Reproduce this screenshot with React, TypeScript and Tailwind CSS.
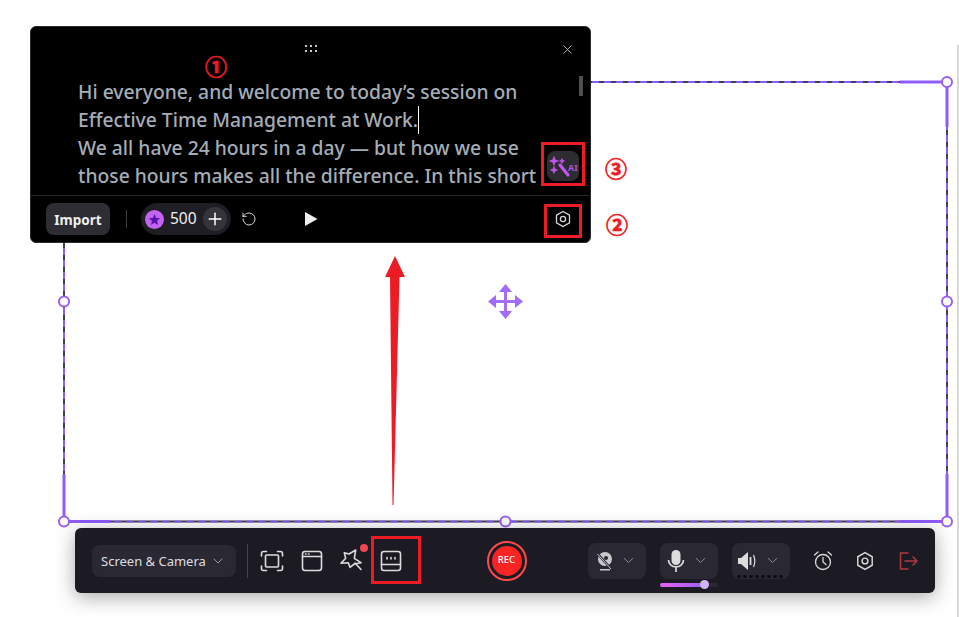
import React from "react";
import { ChevronDown, Plus, RotateCw, X } from "lucide-react";

const Handle = ({ x, y }: { x: number; y: number }) => (
  <circle cx={x} cy={y} r={5} fill="#fff" stroke="#9b5ff5" strokeWidth={2} />
);

function Frame() {
  const L = 64, R = 947, T = 82, B = 521.5;
  const mx = 505.5, my = 301.5;
  return (
    <svg className="absolute left-0 top-0" width={959} height={617}>
      <rect x={L} y={T} width={R - L} height={B - T} fill="none" stroke="#3f3f46" strokeWidth={2} />
      <rect x={L} y={T} width={R - L} height={B - T} fill="none" stroke="#8b5cf6" strokeWidth={2} strokeDasharray="7 5" />
      <g stroke="#8f5cf8" strokeWidth={3} fill="none">
        <path d={`M900 ${T}H${R}V127`} />
        <path d={`M64 474V${B}H111`} />
        <path d={`M900 ${B}H${R}V474`} />
      </g>
      <Handle x={R} y={T} />
      <Handle x={L} y={my} />
      <Handle x={R} y={my} />
      <Handle x={L} y={B} />
      <Handle x={mx} y={B} />
      <Handle x={R} y={B} />
      <g stroke="#a36ef8" strokeWidth={3} fill="#9f6bf8">
        <path d="M505.5 288V315M492 301.5H519" fill="none" />
        <path d="M505.500 284L512 292H499Z M505.500 319L512 311H499Z M488 301.500L496 295V308Z M523 301.500L515 295V308Z" stroke="none" />
      </g>
      <path d="M395 256L405 277H399.500L393.500 505H392.500L390 277H385Z" fill="#ed1c24" />
    </svg>
  );
}

const SmallHex = ({ size = 18, color = "#d8d8d8" }: { size?: number; color?: string }) => (
  <svg width={size} height={size} viewBox="0 0 18 18" fill="none" stroke={color} strokeWidth={1.3}>
    <path d="M9 1.5L15.5 5.2V12.8L9 16.5L2.5 12.8V5.2Z" />
    <circle cx={9} cy={9} r={2.6} />
  </svg>
);

function AiIcon() {
  return (
    <svg width={32} height={30} viewBox="0 0 32 30" fill="#c455ee" stroke="#c455ee" strokeWidth={0.7} strokeLinejoin="round">
      <path d="M7 5.500L8.200 8.800L11.500 10L8.200 11.200L7 14.500L5.800 11.200L2.500 10L5.800 8.800Z" />
      <path d="M15 7.500L15.700 9.300L17.500 10L15.700 10.700L15 12.500L14.300 10.700L12.500 10L14.300 9.300Z" />
      <path d="M7 15.500L8 18L10.500 19L8 20L7 22.500L6 20L3.500 19L6 18Z" />
      <path d="M13 14L21 24" strokeWidth={3.2} strokeLinecap="round" />
      <text x={21} y={20} fontSize={9} fontWeight={700} fontFamily="Noto Sans" fill="#a855d8" stroke="none">AI</text>
    </svg>
  );
}

function Panel() {
  return (
    <div className="absolute left-[30px] top-[26px] flex h-[217px] w-[561px] flex-col overflow-hidden rounded-md border border-[#2a2a2e] bg-black">
      <div className="relative h-[169px] shrink-0 border-b border-[#26262e]">
        <div className="flex h-[51px] items-start justify-center pt-[18px]">
          <div className="grid grid-cols-3 gap-x-[3px] gap-y-[2.5px]">
            {[0, 1, 2, 3, 4, 5].map((i) => (
              <span key={i} className="h-[2px] w-[2px] bg-[#c9c9c9]" />
            ))}
          </div>
        </div>
        <X className="absolute right-[15px] top-[15px] text-[#e5e5e5]" size={15} strokeWidth={1.2} />
        <div className="absolute right-[7px] top-[49px] h-[20px] w-[4px] bg-[#4f4f4f]" />
        <div className="pl-[47px] text-[19.3px] font-medium leading-[28px] text-[#a5adb8] whitespace-nowrap" style={{ fontFamily: '"Noto Sans", sans-serif' }}>
          <div>Hi everyone, and welcome to today’s session on</div>
          <div className="relative inline-block">
            Effective Time Management at Work.
            <span className="absolute right-[-1px] top-0 h-[28px] w-px bg-white" />
          </div>
          <div>We all have 24 hours in a day — but how we use</div>
          <div>those hours makes all the difference. In this short</div>
        </div>
        <div className="absolute left-[516px] top-[124px] flex h-[30px] w-[32px] items-center justify-center rounded-lg bg-[#2c2c31]">
          <AiIcon />
        </div>
      </div>
      <div className="flex flex-1 items-center pl-[15px] pr-[18px]" style={{ fontFamily: '"Noto Sans", sans-serif' }}>
        <button className="h-[32px] w-[64px] rounded-lg bg-[#2d2d33] pt-[2px] text-[13.5px] font-bold text-[#efefef]">Import</button>
        <span className="ml-[16px] h-[18px] w-px bg-[#3c3c42]" />
        <div className="ml-[14px] flex h-[32px] w-[90px] items-center rounded-full bg-[#1e1e24] pl-[4px] pr-[4px]">
          <span className="flex h-[19px] w-[19px] items-center justify-center rounded-full bg-[#c264f0]">
            <svg width={13} height={13} viewBox="0 0 24 24" fill="#5a14a8">
              <path d="M12 2l3 7 7.5.6-5.7 4.9 1.8 7.5L12 18l-6.6 4 1.8-7.5L1.500 9.600 9 9z" />
            </svg>
          </span>
          <span className="ml-[6px] text-[15.5px] text-[#f1f1f1]">500</span>
          <span className="ml-auto flex h-[24px] w-[24px] items-center justify-center rounded-full bg-[#34343a]">
            <Plus size={20} strokeWidth={1.8} className="text-white" />
          </span>
        </div>
        <RotateCw size={16} strokeWidth={1.4} className="ml-[10px] -scale-x-100 text-[#e5e5e5]" />
        <svg className="ml-[47px]" width={14} height={16} viewBox="0 0 14 16" fill="#eeeeee">
          <path d="M1 1L13.500 8L1 15Z" />
        </svg>
        <span className="ml-auto flex">
          <SmallHex size={18} />
        </span>
      </div>
    </div>
  );
}

const IconBase = ({ children }: { children: React.ReactNode }) => (
  <svg width={24} height={24} viewBox="0 0 24 24" fill="none" stroke="#dcdcdc" strokeWidth={1.6} strokeLinecap="round" strokeLinejoin="round">
    {children}
  </svg>
);

const Pill = ({ children, className = "" }: { children: React.ReactNode; className?: string }) => (
  <div className={`relative flex h-[36px] w-[58px] items-center rounded-lg bg-[#2a2933] ${className}`}>
    {children}
    <ChevronDown size={17} strokeWidth={1.4} className="absolute right-[9px] top-[9px] text-[#8e8e96]" />
  </div>
);

function Toolbar() {
  return (
    <div className="absolute left-[75px] top-[528px] flex h-[65px] w-[860px] items-center rounded-md bg-[#1c1b24] pl-[17px] shadow-[0_4px_20px_rgba(0,0,0,0.35)]" style={{ fontFamily: '"Noto Sans", sans-serif' }}>
      <div className="flex h-[32px] w-[144px] items-center rounded-lg bg-[#2a2933] pl-[9px] pt-[3px] text-[13px] text-[#dedee2]">
        Screen &amp; Camera
        <ChevronDown size={16} strokeWidth={1.3} className="ml-[4px] mt-[-3px] text-[#a8a8ae]" />
      </div>
      <span className="ml-[11px] h-[34px] w-px bg-[#44444c]" />
      <div className="ml-[12px] flex items-center gap-[15.5px]">
        <IconBase>
          <path d="M1.500 7V4.500Q1.500 2.500 3.500 2.500H6.500M17.500 2.500H20.500Q22.500 2.500 22.500 4.500V7M1.500 17V19.500Q1.500 21.500 3.500 21.500H6.500M17.500 21.500H20.500Q22.500 21.500 22.500 19.500V17" />
          <rect x={5.500} y={6} width={13} height={12} rx={1} />
        </IconBase>
        <IconBase>
          <rect x={2.500} y={2.500} width={19} height={19} rx={2.500} />
          <path d="M2.500 7.500H21.500M5.500 5H6M8.500 5H9" />
        </IconBase>
        <div className="relative">
          <IconBase>
            <path d="M5.300 3.700L10 5L16.700 1L15.300 9.300L22 13.700L15.300 15L11 18.300L9.300 13.700L2 14.300L6.700 9.300Z" />
            <path d="M16 14L22 20.500" />
          </IconBase>
          <span className="absolute right-[-5px] top-[-5px] h-[8px] w-[8px] rounded-full bg-[#f0484f]" />
        </div>
        <IconBase>
          <rect x={2.500} y={2.500} width={19} height={19} rx={2.500} />
          <path d="M2.500 15.500H21.500M8 8.500V10M12 8.500V10M16 8.500V10" />
        </IconBase>
      </div>
      <div className="ml-[84px] flex h-[40px] w-[40px] items-center justify-center rounded-full border-2 border-[#ff4a4a]">
        <div className="flex h-[30px] w-[30px] items-center justify-center rounded-full bg-[#f92424] text-[9.5px] font-medium text-white">REC</div>
      </div>
      <div className="ml-[61px] flex gap-[14px]">
        <Pill className="pl-[8px]">
          <svg width={18} height={20} viewBox="0 0 18 20" fill="#c9c9cd">
            <circle cx={9} cy={8} r={7} />
            <path d="M4 18H14V19.500H4Z" />
            <path d="M1 2L16 19" stroke="#2a2933" strokeWidth={2.500} />
            <path d="M1.500 3L15 18" stroke="#c9c9cd" strokeWidth={1} />
            <circle cx={10} cy={7} r={2} fill="#2a2933" />
          </svg>
        </Pill>
        <div className="relative">
          <Pill className="pl-[6px]">
            <svg width={20} height={24} viewBox="0 0 20 24" fill="#dcdcdc">
              <rect x={5.500} y={1} width={9} height={15} rx={4.500} />
              <path d="M2.500 11C2.500 20 17.500 20 17.500 11" fill="none" stroke="#dcdcdc" strokeWidth={1.700} />
              <path d="M10 18V23" stroke="#dcdcdc" strokeWidth={1.700} />
            </svg>
          </Pill>
          <div className="absolute left-0 top-[40px] h-[4px] w-[58px] rounded-full bg-[#2a2933]">
            <div className="h-full w-[44px] rounded-full bg-gradient-to-r from-[#e860f4] to-[#9a60f0]" />
            <span className="absolute left-[40px] top-[-2.500px] h-[9px] w-[9px] rounded-full bg-[#cdb6f8]" />
          </div>
        </div>
        <Pill className="pl-[5px]">
          <svg width={22} height={20} viewBox="0 0 22 20" fill="#dcdcdc">
            <path d="M1 7H4L11 1V19L4 13H1Z" />
            <path d="M13.500 6V14" fill="none" stroke="#dcdcdc" strokeWidth={1.800} />
            <path d="M16.500 4C18 7.500 18 12.500 16.500 16" fill="none" stroke="#dcdcdc" strokeWidth={1.200} />
          </svg>
          <div className="absolute bottom-[1px] left-[5px] flex gap-[2px]">
            {[0, 1, 2, 3, 4, 5, 6, 7].map((i) => (
              <span key={i} className="h-[3px] w-[4px] rounded-full bg-[#0d0d12]" />
            ))}
          </div>
        </Pill>
      </div>
      <div className="ml-[22px] flex items-center gap-[21.5px]">
        <svg width={22} height={22} viewBox="0 0 22 22" fill="none" stroke="#d8d8d8" strokeWidth={1.300} strokeLinecap="round">
          <circle cx={11} cy={12} r={7.500} />
          <path d="M11 7.500V12L14 14.500M2.500 5L6 2M19.500 5L16 2" />
        </svg>
        <SmallHex size={20} />
        <svg width={22} height={22} viewBox="0 0 22 22" fill="none" stroke="#b13a40" strokeWidth={1.500} strokeLinecap="round" strokeLinejoin="round">
          <path d="M11 3H3.500V19H11M8 11H19.500M16 7L20 11L16 15" />
        </svg>
      </div>
    </div>
  );
}

function Annotations() {
  const num = { fontFamily: '"Noto Sans CJK SC", sans-serif' };
  const cls = "absolute text-[22px] leading-[30px] font-bold text-[#ed1c24] [-webkit-text-stroke:0.7px_#ed1c24]";
  return (
    <>
      <div className="absolute left-[371px] top-[536px] h-[48px] w-[50px] border-[3px] border-[#ed1c24]" />
      <div className="absolute left-[541px] top-[142px] h-[44px] w-[44px] border-[3px] border-[#ed1c24]" />
      <div className="absolute left-[544px] top-[204px] h-[34px] w-[38px] border-[3px] border-[#ed1c24]" />
      <span className={`${cls} left-[205px] top-[50px]`} style={num}>①</span>
      <span className={`${cls} left-[606px] top-[208px]`} style={num}>②</span>
      <span className={`${cls} left-[605px] top-[152px]`} style={num}>③</span>
    </>
  );
}

export default function App() {
  return (
    <div className="relative h-[617px] w-[959px] overflow-hidden bg-white">
      <div className="absolute bottom-0 right-0 top-[45px] w-[2px] bg-[#d8d8d8]" />
      <Frame />
      <Toolbar />
      <Panel />
      <Annotations />
    </div>
  );
}
